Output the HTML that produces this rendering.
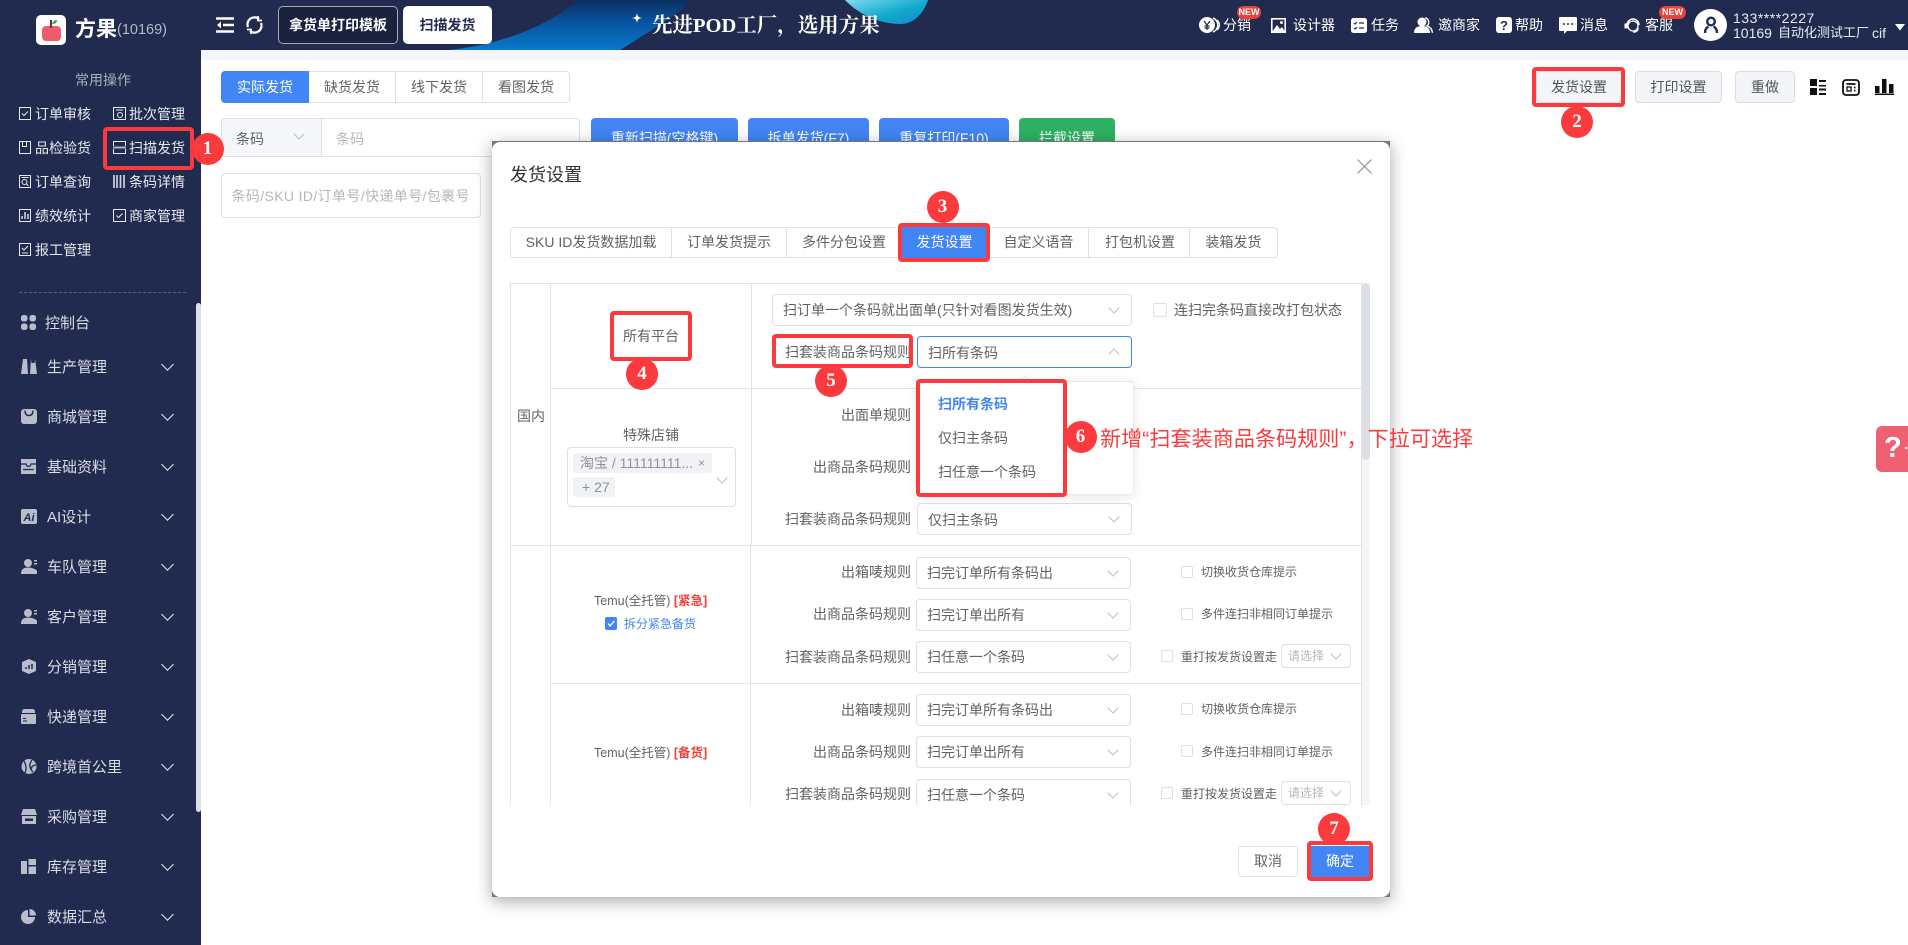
<!DOCTYPE html>
<html lang="zh-CN"><head><meta charset="utf-8"><title>发货设置</title>
<style>
html,body{margin:0;padding:0;width:1908px;height:945px;overflow:hidden;background:#fff;font-family:"Liberation Sans","Noto Sans CJK SC",sans-serif;font-size:14px;color:#606266}
*{box-sizing:border-box}
.a{position:absolute}
.t{position:absolute;white-space:nowrap;line-height:20px;height:20px}
.w{color:#fff}
.sb{color:#e6e8ef}
.m{color:#d9dbe4;font-size:15px}
.btn{position:absolute;height:32px;top:71px;border:1px solid #d9dce3;background:#f4f5f9;border-radius:4px;text-align:center;line-height:30px;color:#50535a}
.tab{position:absolute;top:227px;height:31px;border:1px solid #dcdfe6;border-left:0;text-align:center;line-height:29px;background:#fff}
.ttab{position:absolute;top:71px;height:32px;border:1px solid #dcdfe6;border-left:0;text-align:center;line-height:30px;background:#fff}
.s{position:absolute;height:32px;border:1px solid #dcdfe6;border-radius:4px;background:#fff;line-height:30px;padding-left:10px;color:#606266;white-space:nowrap}
.s:after,.c:after{content:"";position:absolute;width:7px;height:7px;border-right:1px solid #b8bcc4;border-bottom:1px solid #b8bcc4;transform:rotate(45deg);right:13px;top:9px}
.s.up:after{transform:rotate(225deg);top:13px}
.s.sm{width:70px;height:24px;line-height:22px;padding-left:6px;font-size:12px;color:#b4b7be}
.s.sm:after{right:10px;top:5px}
.s.lo{line-height:32px}
.c{position:absolute;width:0;height:0}
.c:after{right:auto;left:-4px;top:-6px}
.ch{position:absolute;width:9px;height:9px;left:163px;border-right:1px solid #e8e9ef;border-bottom:1px solid #e8e9ef;transform:rotate(45deg)}
.l{position:absolute;background:#e1e3e8}
.box{position:absolute;border:1px solid #dcdfe6;border-radius:2px;background:#fff}
.r{position:absolute;border:4px solid #fb3a3d;border-radius:4px}
.n{position:absolute;width:32px;height:32px;border-radius:50%;background:#fb3a3d;color:#fff;text-align:center;line-height:32px;font:bold 19px/32px "Liberation Serif","Noto Serif CJK SC",serif;transform:translate(-16px,-16px)}
.new{position:absolute;top:6px;height:13px;background:#e8423a;color:#fff;border-radius:7px;font:bold 9px/13px "Liberation Sans",sans-serif;text-align:center}
.lab{position:absolute;width:200px;left:711px;text-align:right;line-height:20px;white-space:nowrap;color:#606266}
.ic{position:absolute;overflow:visible}
</style></head><body>

<!-- page backgrounds -->
<div class="a" style="left:201px;top:50px;width:1707px;height:10px;background:#f5f6fa"></div>

<!-- header -->
<div class="a" style="left:0;top:0;width:1908px;height:50px;background:#212b4f;overflow:hidden">
<svg class="a" style="left:0;top:0" width="1908" height="50">
<defs><linearGradient id="g" x1="0" y1="0" x2="0" y2="1"><stop offset="0" stop-color="#0a2f60"/><stop offset=".5" stop-color="#0858a6"/><stop offset="1" stop-color="#0a78c8"/></linearGradient>
<linearGradient id="g2" x1="0" y1="0" x2="1" y2="1"><stop offset="0" stop-color="#7fdcf0"/><stop offset=".55" stop-color="#12a9cc"/><stop offset="1" stop-color="#1189cf"/></linearGradient></defs>
<path d="M450 50C500 44 545 28 578 0H693C670 20 645 34 620 50Z" fill="url(#g)"/>
<path d="M845 0C858 14 880 24 900 24C915 24 924 12 928 0Z" fill="url(#g2)"/>
<path d="M637 13C637.600 16.500 638.500 17.400 642 18C638.500 18.600 637.600 19.500 637 23C636.400 19.500 635.500 18.600 632 18C635.500 17.400 636.400 16.500 637 13Z" fill="#fff"/>
</svg>
</div>
<div class="a" style="left:36px;top:15px;width:30px;height:30px;background:#fff;border-radius:5px"></div>
<svg class="ic" style="left:36px;top:15px" width="30" height="30"><rect x="6" y="11" width="19" height="15" rx="4" fill="#ef5d6b"/><path d="M15 5v8" stroke="#7b2b2b" stroke-width="2"/><path d="M16 9c1-3 3-4 5-4 0 3-2 4-5 4z" fill="#3aa75a"/></svg>
<div class="t w" style="left:75px;top:19px;font-size:21px;font-weight:bold;line-height:22px">方果</div>
<div class="t" style="left:117px;top:20px;font-size:14.500px;color:#b3b7c6">(10169)</div>
<svg class="ic" style="left:216px;top:17px" width="18" height="16"><path d="M0 1.500H18M7 8H18M0 14.500H18" stroke="#fff" stroke-width="2.600"/><path d="M5 4.500L1 8l4 3.500z" fill="#fff"/></svg>
<svg class="ic" style="left:245px;top:16px" width="19" height="18" fill="none" stroke="#fff" stroke-width="2.200"><path d="M3 11A7 7 0 0 1 14 3"/><path d="M16 7A7 7 0 0 1 5 15"/><path d="M13 0v4.500h4" stroke-width="1.800"/><path d="M6 18v-4.500H2" stroke-width="1.800"/></svg>
<div class="a w" style="left:278px;top:6px;width:120px;height:38px;background:#1a2240;border:1px solid #a5a8b3;border-radius:5px;text-align:center;line-height:36px;font-weight:bold">拿货单打印模板</div>
<div class="a" style="left:403px;top:6px;width:89px;height:38px;background:#fff;border-radius:5px;text-align:center;line-height:38px;font-weight:bold;color:#222c50">扫描发货</div>
<div class="t w" style="left:652px;top:14px;font-family:'Liberation Serif','Noto Serif CJK SC',serif;font-size:20.500px;line-height:24px;height:24px;font-weight:bold">先进POD工厂，选用方果</div>

<!-- header right -->
<svg class="ic" style="left:1199px;top:17px" width="21" height="16"><path d="M14 1a7.500 7.500 0 0 1 0 14" fill="none" stroke="#fff" stroke-width="1.500"/><path d="M18 3a6.500 6.500 0 0 1 0 10" fill="none" stroke="#fff" stroke-width="1.300"/><circle cx="8" cy="8" r="8" fill="#fff"/><path d="M5 4l3 4 3-4M8 8v5M5.500 9h5M5.500 11h5" stroke="#212b4f" fill="none" stroke-width="1.200"/></svg>
<div class="t w" style="left:1223px;top:15px">分销</div>
<div class="new" style="left:1237px;width:24px">NEW</div>
<svg class="ic" style="left:1271px;top:18px" width="15" height="15"><rect x=".8" y=".8" width="13.400" height="13.400" fill="#212b4f" stroke="#fff" stroke-width="1.600"/><path d="M1 14L6 7l3 4 2-2 3 5z" fill="#fff"/><circle cx="10.500" cy="4.500" r="1.500" fill="#fff"/></svg>
<div class="t w" style="left:1293px;top:15px">设计器</div>
<svg class="ic" style="left:1351px;top:18px" width="16" height="15"><rect width="16" height="15" rx="2.500" fill="#fff"/><path d="M3 5l1 1 2-2M3 10l1 1 2-2M8 5h5M8 10h5" stroke="#212b4f" fill="none" stroke-width="1.200"/></svg>
<div class="t w" style="left:1371px;top:15px">任务</div>
<svg class="ic" style="left:1414px;top:17px" width="19" height="16"><circle cx="8" cy="5" r="4.500" fill="#fff"/><path d="M0 16c0-5 3-7 8-7s8 2 8 7z" fill="#fff"/><path d="M11 .8a4.500 4.500 0 0 1 2 8c3 1 5 3.500 5.500 7" fill="none" stroke="#fff" stroke-width="1.400"/></svg>
<div class="t w" style="left:1438px;top:15px">邀商家</div>
<svg class="ic" style="left:1496px;top:17px" width="16" height="16"><rect width="16" height="16" rx="3" fill="#fff"/><text x="8" y="13" font-size="13" font-weight="bold" text-anchor="middle" fill="#212b4f" font-family="Liberation Sans">?</text></svg>
<div class="t w" style="left:1515px;top:15px">帮助</div>
<svg class="ic" style="left:1559px;top:17px" width="18" height="18"><path d="M1 0h16a1 1 0 0 1 1 1v12a1 1 0 0 1-1 1H8l-3 3v-3H1a1 1 0 0 1-1-1V1a1 1 0 0 1 1-1z" fill="#fff"/><path d="M4 7h2M8 7h2M12 7h2" stroke="#212b4f" stroke-width="1.600"/></svg>
<div class="t w" style="left:1580px;top:15px">消息</div>
<svg class="ic" style="left:1624px;top:17px" width="17" height="16" fill="none" stroke="#fff"><path d="M3 8a6 6 0 0 1 12 0" stroke-width="1.500"/><rect x=".5" y="6.500" width="3" height="5" fill="#fff" stroke="none"/><circle cx="9" cy="9" r="5" stroke-width="1.300"/><path d="M14 11c0 3-2 4-5 4" stroke-width="1.500"/></svg>
<div class="t w" style="left:1645px;top:15px">客服</div>
<div class="new" style="left:1659px;width:27px">NEW</div>
<div class="a" style="left:1694px;top:9px;width:33px;height:32px;border-radius:50%;background:#fff"></div>
<svg class="ic" style="left:1703px;top:16px" width="16" height="18" fill="none" stroke="#212b4f" stroke-width="2.400"><circle cx="8" cy="5.500" r="3.800"/><path d="M2 17c0-3 1.500-5.500 3.500-6.500M14 17c0-3-1.500-5.500-3.500-6.500"/></svg>
<div class="t" style="left:1733px;top:8px;color:#e8eaf2;letter-spacing:.5px">133****2227</div>
<div class="t" style="left:1733px;top:23px;color:#e8eaf2">10169</div>
<div class="t" style="left:1778px;top:23px;color:#e8eaf2;font-size:13px">自动化测试工厂</div>
<div class="t" style="left:1872px;top:23px;color:#e8eaf2">cif</div>
<svg class="ic" style="left:1895px;top:24px" width="10" height="7"><path d="M0 0h10L5 6.500z" fill="#fff"/></svg>

<!-- sidebar -->
<div class="a" style="left:0;top:50px;width:201px;height:895px;background:#212b4f"></div>
<div class="t" style="left:75px;top:70px;color:#a8adbd">常用操作</div>

<svg class="ic" style="left:19px;top:107px" width="12" height="13" fill="none" stroke="#e6e8ef"><rect x=".5" y=".5" width="11" height="12"/><path d="M3 6.500l2 2 4-4"/></svg>
<div class="t sb" style="left:35px;top:104px">订单审核</div>
<svg class="ic" style="left:113px;top:107px" width="13" height="13" fill="none" stroke="#e6e8ef"><rect x=".5" y=".5" width="12" height="12"/><path d="M3 3h7"/><circle cx="7" cy="8" r="2.500"/></svg>
<div class="t sb" style="left:129px;top:104px">批次管理</div>

<svg class="ic" style="left:19px;top:141px" width="12" height="13" fill="none" stroke="#e6e8ef"><path d="M.5 .5h11v12H.5zM3.500 .5v5h4v-5"/></svg>
<div class="t sb" style="left:35px;top:138px">品检验货</div>
<svg class="ic" style="left:113px;top:141px" width="13" height="13" fill="none" stroke="#e6e8ef"><path d="M.5 5V.5h12V5M.5 8v4.500h12V8"/><path d="M0 6.500h13" stroke="#b0b3c1" stroke-width="2"/></svg>
<div class="t sb" style="left:129px;top:138px">扫描发货</div>

<svg class="ic" style="left:19px;top:175px" width="12" height="13" fill="none" stroke="#e6e8ef"><rect x=".5" y=".5" width="11" height="12"/><circle cx="5.500" cy="7" r="2.500"/><path d="M7.500 9l2 2M2.500 2.500h7"/></svg>
<div class="t sb" style="left:35px;top:172px">订单查询</div>
<svg class="ic" style="left:113px;top:175px" width="13" height="13"><path d="M1 0v13M4 0v13M7.500 0v13M11 0v13" stroke="#cfd2dc" stroke-width="1.700"/></svg>
<div class="t sb" style="left:129px;top:172px">条码详情</div>

<svg class="ic" style="left:19px;top:209px" width="12" height="13" fill="none" stroke="#e6e8ef"><rect x=".5" y=".5" width="11" height="12"/><path d="M3 10V7M6 10V3M9 10V5" stroke-width="1.400"/></svg>
<div class="t sb" style="left:35px;top:206px">绩效统计</div>
<svg class="ic" style="left:113px;top:209px" width="13" height="13" fill="none" stroke="#e6e8ef"><rect x=".5" y=".5" width="12" height="12"/><path d="M3.500 6.500l2 2 4-4"/></svg>
<div class="t sb" style="left:129px;top:206px">商家管理</div>

<svg class="ic" style="left:19px;top:243px" width="12" height="13" fill="none" stroke="#e6e8ef"><rect x=".5" y=".5" width="11" height="12"/><path d="M3 5l2 2 4-4M3 10h6"/></svg>
<div class="t sb" style="left:35px;top:240px">报工管理</div>

<div class="a" style="left:19px;top:292px;width:167px;border-top:1px dashed #5a6280"></div>
<div class="a" style="left:196px;top:303px;width:5px;height:509px;background:#dcdfe8;border-radius:3px"></div>

<!-- menu -->
<svg class="ic" style="left:21px;top:315px" width="15" height="15" fill="#b9bcca"><rect width="6.500" height="6.500" rx="2.500"/><rect x="8.500" width="6.500" height="6.500" rx="2.500"/><rect y="8.500" width="6.500" height="6.500" rx="2.500"/><rect x="8.500" y="8.500" width="6.500" height="6.500" rx="2.500"/></svg>
<div class="t m" style="left:45px;top:314px">控制台</div>

<svg class="ic" style="left:21px;top:359px" width="16" height="15" fill="#b9bcca"><path d="M2 0h4l1 15H0zM10 0l.5 4h3L14 0l2 15H9z"/></svg>
<div class="t m" style="left:47px;top:358px">生产管理</div><div class="ch" style="top:360px"></div>

<svg class="ic" style="left:21px;top:409px" width="16" height="15"><rect width="16" height="15" rx="3" fill="#b9bcca"/><path d="M4 1.500c0 4 2 5 4 5s4-1 4-5" fill="none" stroke="#212b4f" stroke-width="1.400"/></svg>
<div class="t m" style="left:47px;top:408px">商城管理</div><div class="ch" style="top:410px"></div>

<svg class="ic" style="left:21px;top:459px" width="15" height="15"><rect width="15" height="15" fill="#b9bcca"/><path d="M0 5h5c.5 2 1.500 2.500 2.500 2.500S9.500 7 10 5h5M2 10.500h11" fill="none" stroke="#212b4f" stroke-width="1.300"/></svg>
<div class="t m" style="left:47px;top:458px">基础资料</div><div class="ch" style="top:460px"></div>

<svg class="ic" style="left:21px;top:509px" width="16" height="15"><rect width="16" height="15" rx="2" fill="#b9bcca"/><text x="8" y="12" font-family="Liberation Sans" font-size="11" font-style="italic" font-weight="bold" text-anchor="middle" fill="#212b4f">Ai</text></svg>
<div class="t m" style="left:47px;top:508px">AI设计</div><div class="ch" style="top:510px"></div>

<svg class="ic" style="left:21px;top:559px" width="16" height="15" fill="#b9bcca"><circle cx="7" cy="4" r="4"/><path d="M0 15c0-5 3-6.500 7-6.500s7 1.500 9 3V15z"/><rect x="13" y="1" width="3" height="1.500"/><rect x="13" y="4" width="3" height="1.500"/></svg>
<div class="t m" style="left:47px;top:558px">车队管理</div><div class="ch" style="top:560px"></div>

<svg class="ic" style="left:21px;top:609px" width="16" height="15" fill="#b9bcca"><circle cx="7" cy="4" r="4"/><path d="M0 15c0-5 3-6.500 7-6.500s7 1.500 9 3V15z"/><rect x="13" y="1" width="3" height="1.500"/><rect x="13" y="4" width="3" height="1.500"/></svg>
<div class="t m" style="left:47px;top:608px">客户管理</div><div class="ch" style="top:610px"></div>

<svg class="ic" style="left:22px;top:659px" width="14" height="15"><path d="M7 0l7 3v9l-7 3-7-3V3z" fill="#b9bcca"/><path d="M4 10V8M7 10V6M10 10V5" stroke="#212b4f" stroke-width="1.500"/></svg>
<div class="t m" style="left:47px;top:658px">分销管理</div><div class="ch" style="top:660px"></div>

<svg class="ic" style="left:21px;top:709px" width="15" height="15" fill="#b9bcca"><path d="M1 3c0-2 1-3 3-3h7c2 0 3 1 3 3v1H1z"/><rect y="5" width="15" height="10" rx="1"/><path d="M2 12h4M2 9.500h3" stroke="#212b4f"/></svg>
<div class="t m" style="left:47px;top:708px">快递管理</div><div class="ch" style="top:710px"></div>

<svg class="ic" style="left:21px;top:759px" width="16" height="15"><circle cx="8" cy="7.500" r="7.500" fill="#b9bcca"/><path d="M3 2c2 4 3 7 1 12M11 1c-3 4-3 8 1 12M15 6c-3 0-5 2-5 5" fill="none" stroke="#212b4f" stroke-width="1.300"/></svg>
<div class="t m" style="left:47px;top:758px">跨境首公里</div><div class="ch" style="top:760px"></div>

<svg class="ic" style="left:21px;top:809px" width="16" height="15" fill="#b9bcca"><path d="M2 0h12l2 6H0z"/><rect x="1" y="7" width="14" height="8"/><rect x="4" y="9.500" width="8" height="2.500" fill="#212b4f"/></svg>
<div class="t m" style="left:47px;top:808px">采购管理</div><div class="ch" style="top:810px"></div>

<svg class="ic" style="left:21px;top:859px" width="15" height="15" fill="#b9bcca"><rect y="2" width="6" height="13"/><rect x="7.500" width="7.500" height="6"/><rect x="7.500" y="7.500" width="7.500" height="7.500"/></svg>
<div class="t m" style="left:47px;top:858px">库存管理</div><div class="ch" style="top:860px"></div>

<svg class="ic" style="left:21px;top:909px" width="15" height="15" fill="#b9bcca"><path d="M7 1a7 7 0 1 0 7 7H7z"/><path d="M8.500 0A6.500 6.500 0 0 1 15 6.500H8.500z"/></svg>
<div class="t m" style="left:47px;top:908px">数据汇总</div><div class="ch" style="top:910px"></div>

<!-- content -->
<div class="a" style="left:221px;top:71px;width:88px;height:32px;background:#4285f4;border-radius:4px 0 0 4px;color:#fff;text-align:center;line-height:32px">实际发货</div>
<div class="ttab" style="left:309px;width:87px">缺货发货</div>
<div class="ttab" style="left:396px;width:87px">线下发货</div>
<div class="ttab" style="left:483px;width:87px;border-radius:0 4px 4px 0">看图发货</div>

<div class="a" style="left:221px;top:118px;width:359px;height:39px;border:1px solid #dcdfe6;border-radius:4px;background:#fff"></div>
<div class="a" style="left:221px;top:118px;width:101px;height:39px;border:1px solid #dcdfe6;border-radius:4px 0 0 4px;background:#f5f7fa"></div>
<div class="t" style="left:236px;top:129px">条码</div><div class="c" style="left:299px;top:136px"></div>
<div class="t" style="left:336px;top:129px;color:#b4b7be">条码</div>
<div class="a" style="left:221px;top:173px;width:260px;height:45px;border:1px solid #dcdfe6;border-radius:4px;background:#fff"></div>
<div class="t" style="left:231.500px;top:186px;color:#b4b7be;letter-spacing:.37px">条码/SKU ID/订单号/快递单号/包裹号</div>

<div class="a w" style="left:591px;top:118px;width:147px;height:40px;background:#4285f4;border-radius:4px;text-align:center;line-height:40px">重新扫描(空格键)</div>
<div class="a w" style="left:748px;top:118px;width:121px;height:40px;background:#4285f4;border-radius:4px;text-align:center;line-height:40px">拆单发货(F7)</div>
<div class="a w" style="left:879px;top:118px;width:130px;height:40px;background:#4285f4;border-radius:4px;text-align:center;line-height:40px">重复打印(F10)</div>
<div class="a w" style="left:1019px;top:118px;width:96px;height:40px;background:#2fb163;border-radius:4px;text-align:center;line-height:40px">拦截设置</div>

<div class="btn" style="left:1536px;width:86px">发货设置</div>
<div class="btn" style="left:1635px;width:87px">打印设置</div>
<div class="btn" style="left:1735px;width:60px">重做</div>
<svg class="ic" style="left:1810px;top:79px" width="16" height="16" fill="#111"><rect width="7" height="7"/><rect y="9" width="7" height="7"/><path d="M9 1h7v2H9zM9 6h7v1.500H9zM9 9.500h7v2H9zM9 14h7v2H9z"/></svg>
<svg class="ic" style="left:1842px;top:79px" width="18" height="17" fill="none" stroke="#111" stroke-width="1.800"><rect x="1" y="1" width="16" height="15" rx="3"/><path d="M4.500 5h9" /><rect x="5" y="8" width="4" height="4" stroke-width="1.300"/><path d="M12 8.500h1.500M12 11.500h1.500"/></svg>
<svg class="ic" style="left:1875px;top:79px" width="19" height="16" fill="#111"><rect y="7" width="4.500" height="7"/><rect x="7" y="0" width="4.500" height="14"/><rect x="14" y="5" width="4.500" height="9"/><rect y="14.500" width="19" height="1.500"/></svg>

<!-- help -->
<div class="a" style="left:1876px;top:426px;width:32px;height:46px;background:#ef6172;border-radius:6px 0 0 6px;overflow:hidden"><div class="a w" style="left:8px;top:7px;font-size:29px;font-weight:bold;line-height:30px">?</div><div class="a" style="left:29px;top:21px;width:2px;height:2px;background:#fff"></div></div>

<!-- modal -->
<div class="a" style="left:492px;top:141px;width:898px;height:756px;background:#777;box-shadow:0 4px 16px rgba(0,0,0,.35)"></div>
<div class="a" style="left:492px;top:142px;width:898px;height:755px;background:#fff;border-radius:8px"></div>
<div class="t" style="left:510px;top:163px;font-size:18px;line-height:24px;height:24px;color:#303133">发货设置</div>
<svg class="ic" style="left:1357px;top:159px" width="15" height="15"><path d="M.5 .5l14 14M14.500 .5l-14 14" stroke="#8f9299" stroke-width="1.200"/></svg>

<div class="tab" style="left:510px;width:162px;border-left:1px solid #dcdfe6;border-radius:4px 0 0 4px">SKU ID发货数据加载</div>
<div class="tab" style="left:672px;width:115px">订单发货提示</div>
<div class="tab" style="left:787px;width:115px">多件分包设置</div>
<div class="a w" style="left:902px;top:227px;width:85px;height:31px;background:#4285f4;text-align:center;line-height:31px">发货设置</div>
<div class="tab" style="left:987px;width:102px;padding-left:2px">自定义语音</div>
<div class="tab" style="left:1089px;width:101px;padding-left:2px">打包机设置</div>
<div class="tab" style="left:1190px;width:88px;border-radius:0 4px 4px 0">装箱发货</div>

<!-- table, clipped at y=805 -->
<div class="a" style="left:0;top:0;width:1908px;height:805px;overflow:hidden">
<div class="l" style="left:510px;top:283px;width:851px;height:1px"></div>
<div class="l" style="left:510px;top:283px;width:1px;height:522px"></div>
<div class="l" style="left:550px;top:283px;width:1px;height:522px"></div>
<div class="l" style="left:751px;top:283px;width:1px;height:262px"></div>
<div class="l" style="left:750px;top:546px;width:1px;height:259px"></div>
<div class="l" style="left:551px;top:388px;width:810px;height:1px"></div>
<div class="l" style="left:510px;top:545px;width:851px;height:1px"></div>
<div class="l" style="left:551px;top:683px;width:810px;height:1px"></div>
<div class="l" style="left:1361px;top:283px;width:1px;height:522px"></div>
<div class="a" style="left:1362px;top:283px;width:8px;height:522px;background:#f6f6f7"></div>
<div class="a" style="left:1362px;top:283px;width:8px;height:177px;background:#dcdfe6;border-radius:4px"></div>

<div class="t" style="left:517px;top:406px">国内</div>
<div class="t" style="left:623px;top:326px">所有平台</div>
<div class="s" style="left:772px;top:294px;width:360px">扫订单一个条码就出面单(只针对看图发货生效)</div>
<div class="box" style="left:1153px;top:303px;width:14px;height:14px"></div>
<div class="t" style="left:1174px;top:300px">连扫完条码直接改打包状态</div>
<div class="lab" style="top:342px">扫套装商品条码规则</div>
<div class="s up lo" style="left:917px;top:336px;width:215px;border-color:#4285f4">扫所有条码</div>

<div class="lab" style="top:405px">出面单规则</div>
<div class="lab" style="top:457px">出商品条码规则</div>
<div class="lab" style="top:509px">扫套装商品条码规则</div>
<div class="s lo" style="left:917px;top:503px;width:215px">仅扫主条码</div>
<div class="t" style="left:623px;top:425px">特殊店铺</div>
<div class="a" style="left:567px;top:447px;width:169px;height:60px;border:1px solid #dcdfe6;border-radius:4px"></div>
<div class="a" style="left:573px;top:453px;width:139px;height:20px;background:#f0f2f5;border-radius:3px"></div>
<div class="t" style="left:580px;top:453px;color:#909399">淘宝 / 111111111...</div>
<div class="t" style="left:698px;top:453px;color:#909399;font-size:12px">×</div>
<div class="a" style="left:573px;top:477px;width:42px;height:20px;background:#f0f2f5;border-radius:3px"></div>
<div class="t" style="left:582px;top:477px;color:#909399">+ 27</div>
<div class="c" style="left:722px;top:480px"></div>

<div class="t" style="left:594px;top:591px;font-size:12.500px">Temu(全托管) <b style="color:#f0403c">[紧急]</b></div>
<div class="a" style="left:605px;top:617px;width:12px;height:13px;background:#4285f4;border-radius:2px"></div>
<svg class="ic" style="left:605px;top:617px" width="12" height="13"><path d="M3 6.500l2.200 2.500 4-5" fill="none" stroke="#fff" stroke-width="1.300"/></svg>
<div class="t" style="left:624px;top:614px;color:#4285f4;font-size:12px">拆分紧急备货</div>

<div class="lab" style="top:562px">出箱唛规则</div>
<div class="s" style="left:916px;top:557px;width:215px">扫完订单所有条码出</div>
<div class="lab" style="top:604px">出商品条码规则</div>
<div class="s" style="left:916px;top:599px;width:215px">扫完订单出所有</div>
<div class="lab" style="top:647px">扫套装商品条码规则</div>
<div class="s" style="left:916px;top:641px;width:215px">扫任意一个条码</div>

<div class="box" style="left:1181px;top:566px;width:12px;height:12px"></div>
<div class="t" style="left:1201px;top:562px;font-size:12px">切换收货仓库提示</div>
<div class="box" style="left:1181px;top:608px;width:12px;height:12px"></div>
<div class="t" style="left:1201px;top:604px;font-size:12px">多件连扫非相同订单提示</div>
<div class="box" style="left:1161px;top:650px;width:12px;height:12px"></div>
<div class="t" style="left:1181px;top:647px;font-size:12px">重打按发货设置走</div>
<div class="s sm" style="left:1281px;top:644px">请选择</div>

<div class="t" style="left:594px;top:743px;font-size:12.500px">Temu(全托管) <b style="color:#f0403c">[备货]</b></div>
<div class="lab" style="top:700px">出箱唛规则</div>
<div class="s" style="left:916px;top:694px;width:215px">扫完订单所有条码出</div>
<div class="lab" style="top:742px">出商品条码规则</div>
<div class="s" style="left:916px;top:736px;width:215px">扫完订单出所有</div>
<div class="lab" style="top:784px">扫套装商品条码规则</div>
<div class="s" style="left:916px;top:779px;width:215px">扫任意一个条码</div>

<div class="box" style="left:1181px;top:703px;width:12px;height:12px"></div>
<div class="t" style="left:1201px;top:699px;font-size:12px">切换收货仓库提示</div>
<div class="box" style="left:1181px;top:745px;width:12px;height:12px"></div>
<div class="t" style="left:1201px;top:742px;font-size:12px">多件连扫非相同订单提示</div>
<div class="box" style="left:1161px;top:787px;width:12px;height:12px"></div>
<div class="t" style="left:1181px;top:784px;font-size:12px">重打按发货设置走</div>
<div class="s sm" style="left:1281px;top:781px">请选择</div>
</div>

<!-- dropdown -->
<div class="a" style="left:917px;top:381px;width:217px;height:114px;background:#fff;border:1px solid #e8e9ed;border-radius:4px;box-shadow:0 2px 12px rgba(0,0,0,.1)"></div>
<div class="a" style="left:1021px;top:377px;width:8px;height:8px;background:#fff;border-left:1px solid #e8e9ed;border-top:1px solid #e8e9ed;transform:rotate(45deg)"></div>
<div class="t" style="left:938px;top:394px;color:#4285f4;font-weight:bold">扫所有条码</div>
<div class="t" style="left:938px;top:428px">仅扫主条码</div>
<div class="t" style="left:938px;top:462px">扫任意一个条码</div>

<!-- footer -->
<div class="a" style="left:1238px;top:846px;width:60px;height:31px;border:1px solid #dcdfe6;border-radius:4px;text-align:center;line-height:29px;background:#fff">取消</div>
<div class="a w" style="left:1311px;top:846px;width:58px;height:31px;background:#4285f4;text-align:center;line-height:31px">确定</div>

<!-- annotations -->
<div class="r" style="left:103px;top:127px;width:91px;height:43px"></div>
<div class="r" style="left:1532px;top:67px;width:93px;height:40px"></div>
<div class="r" style="left:898px;top:223px;width:92px;height:39px"></div>
<div class="r" style="left:610px;top:311px;width:82px;height:50px"></div>
<div class="r" style="left:772px;top:334px;width:141px;height:34px"></div>
<div class="r" style="left:916px;top:379px;width:151px;height:118px"></div>
<div class="r" style="left:1307px;top:841px;width:66px;height:40px"></div>
<div class="n" style="left:207.500px;top:148.500px">1</div>
<div class="n" style="left:1577px;top:121.500px">2</div>
<div class="n" style="left:942.500px;top:207px">3</div>
<div class="n" style="left:642px;top:373.500px">4</div>
<div class="n" style="left:831px;top:381px">5</div>
<div class="n" style="left:1080.500px;top:436.500px">6</div>
<div class="n" style="left:1334px;top:829px">7</div>
<div class="t" style="left:1100px;top:426px;height:28px;line-height:28px;font-size:21px;letter-spacing:.12px;color:#fb3a3d">新增“扫套装商品条码规则”，下拉可选择</div>

</body></html>
